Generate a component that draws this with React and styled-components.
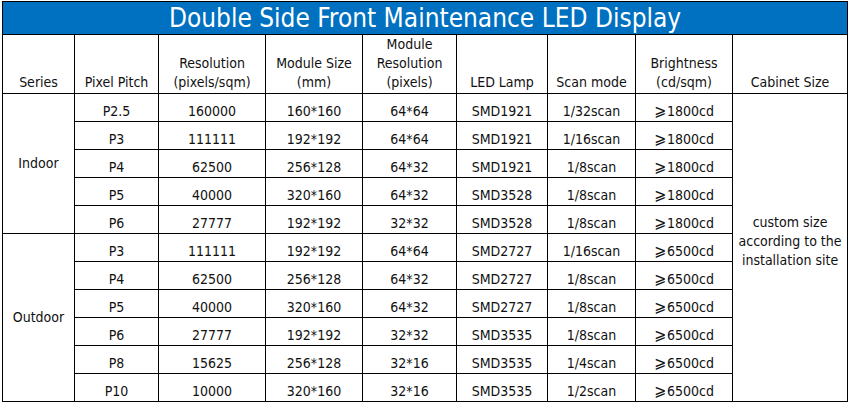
import React from "react";
import styled, { createGlobalStyle } from "styled-components";

const GlobalStyle = createGlobalStyle`
  html, body {
    margin: 0;
    padding: 0;
    background: #ffffff;
  }
  body {
    font-family: "DejaVu Sans Condensed", "DejaVu Sans", sans-serif;
  }
`;

const COLUMNS = [72, 84, 107, 97, 94, 91, 88, 97, 115];

const indoor = [
  ["P2.5", "160000", "160*160", "64*64", "SMD1921", "1/32scan", "1800cd"],
  ["P3", "111111", "192*192", "64*64", "SMD1921", "1/16scan", "1800cd"],
  ["P4", "62500", "256*128", "64*32", "SMD1921", "1/8scan", "1800cd"],
  ["P5", "40000", "320*160", "64*32", "SMD3528", "1/8scan", "1800cd"],
  ["P6", "27777", "192*192", "32*32", "SMD3528", "1/8scan", "1800cd"],
];

const outdoor = [
  ["P3", "111111", "192*192", "64*64", "SMD2727", "1/16scan", "6500cd"],
  ["P4", "62500", "256*128", "64*32", "SMD2727", "1/8scan", "6500cd"],
  ["P5", "40000", "320*160", "64*32", "SMD2727", "1/8scan", "6500cd"],
  ["P6", "27777", "192*192", "32*32", "SMD3535", "1/8scan", "6500cd"],
  ["P8", "15625", "256*128", "32*16", "SMD3535", "1/4scan", "6500cd"],
  ["P10", "10000", "320*160", "32*16", "SMD3535", "1/2scan", "6500cd"],
];

const Page = styled.div`
  padding: 1px 0 0 2px;
`;

const Table = styled.table`
  border-collapse: collapse;
  table-layout: fixed;
  width: 846px;
  color: #111;
  font-size: 14px;
`;

const TitleCell = styled.th`
  background: #0070c0;
  color: #ffffff;
  font-weight: normal;
  font-size: 26px;
  height: 32px;
  padding: 0;
  border: 1px solid #000;
  text-align: center;
  vertical-align: middle;
  line-height: 32px;
`;

const HeadCell = styled.th`
  font-weight: normal;
  border: 1px solid #000;
  height: 55px;
  padding: 0 0 1px;
  text-align: center;
  vertical-align: bottom;
  line-height: 19px;
`;

const Cell = styled.td`
  border: 1px solid #000;
  height: 26px;
  padding: 0 0 1px;
  text-align: center;
  vertical-align: bottom;
  line-height: 17px;
  white-space: nowrap;
`;

const GroupCell = styled(Cell)`
  vertical-align: middle;
  padding: 0;
`;

const NoteCell = styled(Cell)`
  vertical-align: middle;
  white-space: normal;
  line-height: 19px;
  padding: 0 0 12px;
`;

const Ge = styled.span`
  font-size: 16px;
  margin-right: 1px;
`;

const Row = ({ cells }) =>
  cells.map((c, i) => (
    <Cell key={i}>
      {i === 6 ? (
        <>
          <Ge>⩾</Ge>
          {c}
        </>
      ) : (
        c
      )}
    </Cell>
  ));

export default function App() {
  return (
    <>
      <GlobalStyle />
      <Page>
        <Table>
          <colgroup>
            {COLUMNS.map((w, i) => (
              <col key={i} style={{ width: w }} />
            ))}
          </colgroup>
          <thead>
            <tr>
              <TitleCell colSpan={9}>Double Side Front Maintenance LED Display</TitleCell>
            </tr>
            <tr>
              <HeadCell>Series</HeadCell>
              <HeadCell>Pixel Pitch</HeadCell>
              <HeadCell>
                Resolution
                <br />
                (pixels/sqm)
              </HeadCell>
              <HeadCell>
                Module Size
                <br />
                (mm)
              </HeadCell>
              <HeadCell>
                Module
                <br />
                Resolution
                <br />
                (pixels)
              </HeadCell>
              <HeadCell>LED Lamp</HeadCell>
              <HeadCell>Scan mode</HeadCell>
              <HeadCell>
                Brightness
                <br />
                (cd/sqm)
              </HeadCell>
              <HeadCell>Cabinet Size</HeadCell>
            </tr>
          </thead>
          <tbody>
            {indoor.map((r, i) => (
              <tr key={"in" + i}>
                {i === 0 && <GroupCell rowSpan={indoor.length}>Indoor</GroupCell>}
                <Row cells={r} />
                {i === 0 && (
                  <NoteCell rowSpan={indoor.length + outdoor.length}>
                    custom size
                    <br />
                    according to the
                    <br />
                    installation site
                  </NoteCell>
                )}
              </tr>
            ))}
            {outdoor.map((r, i) => (
              <tr key={"out" + i}>
                {i === 0 && <GroupCell rowSpan={outdoor.length}>Outdoor</GroupCell>}
                <Row cells={r} />
              </tr>
            ))}
          </tbody>
        </Table>
      </Page>
    </>
  );
}
